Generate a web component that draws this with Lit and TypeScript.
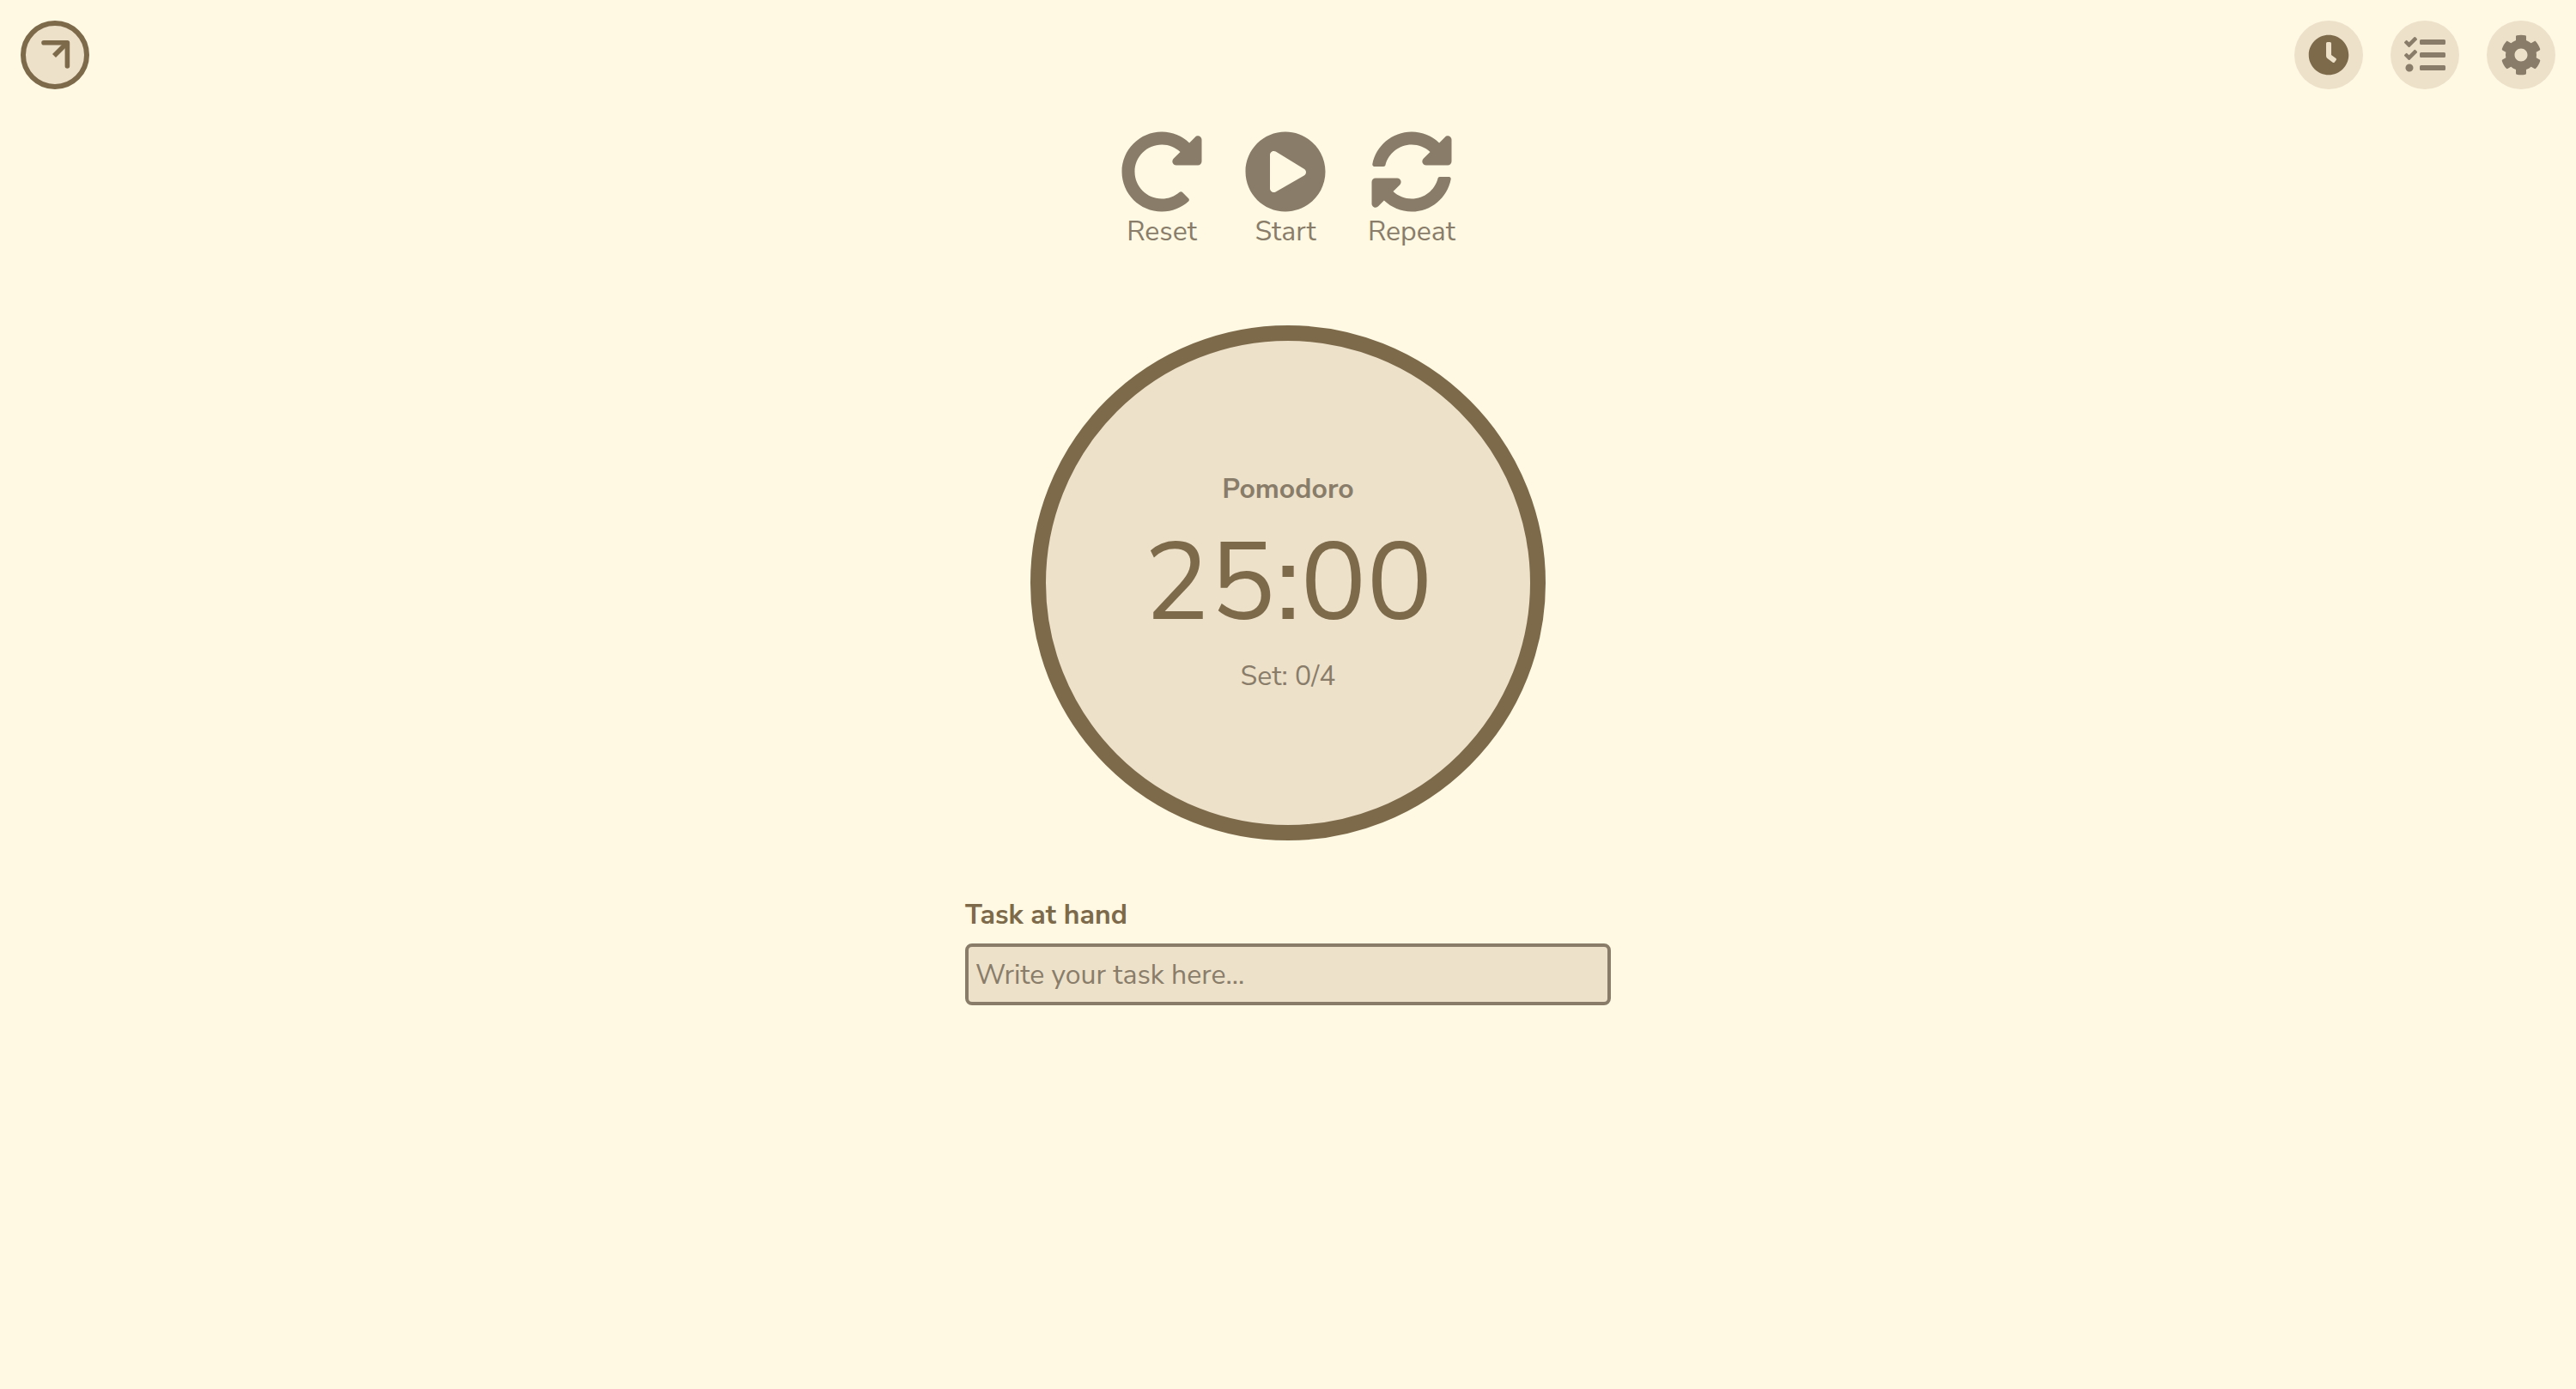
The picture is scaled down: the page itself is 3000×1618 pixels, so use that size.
import { LitElement, html, svg, css } from "lit";
import { customElement, property, state } from "lit/decorators.js";

const ICONS = {
  redo: "M256.455 8c66.269.119 126.437 26.233 170.859 68.685l35.715-35.715C478.149 25.851 504 36.559 504 57.941V192c0 13.255-10.745 24-24 24H345.941c-21.382 0-32.09-25.851-16.971-40.971l41.75-41.75c-30.864-28.899-70.801-44.907-113.23-45.273-92.398-.798-170.283 73.977-169.484 169.442C88.764 348.009 162.184 424 256 424c41.127 0 79.997-14.678 110.629-41.556 4.743-4.161 11.906-3.908 16.368.553l39.662 39.662c4.872 4.872 4.631 12.815-.482 17.433C378.202 479.813 319.926 504 256 504 119.034 504 8.001 392.967 8 256.002 7.999 119.193 119.646 7.755 256.455 8z",
  play: "M256 8C119 8 8 119 8 256s111 248 248 248 248-111 248-248S393 8 256 8zm115.7 272l-176 101c-15.8 8.8-35.7-2.5-35.7-21V152c0-18.4 19.8-29.8 35.7-21l176 107c16.4 9.2 16.4 32.9 0 42z",
  sync: "M370.72 133.28C339.458 104.008 298.888 87.962 255.848 88c-77.458.068-144.328 53.178-162.791 126.85-1.344 5.363-6.122 9.15-11.651 9.15H24.103c-7.498 0-13.194-6.807-11.807-14.176C33.933 94.924 134.813 8 256 8c66.448 0 126.791 26.136 171.315 68.685L463.03 40.97C478.149 25.851 504 36.559 504 57.941V192c0 13.255-10.745 24-24 24H345.941c-21.382 0-32.09-25.851-16.971-40.971l41.75-41.749zM32 296h134.059c21.382 0 32.09 25.851 16.971 40.971l-41.75 41.75c31.262 29.273 71.835 45.319 114.876 45.28 77.418-.07 144.315-53.144 162.787-126.849 1.344-5.363 6.122-9.15 11.651-9.15h57.304c7.498 0 13.194 6.807 11.807 14.176C478.067 417.076 377.187 504 256 504c-66.448 0-126.791-26.136-171.315-68.685L48.97 471.03C33.851 486.149 8 475.441 8 454.059V320c0-13.255 10.745-24 24-24z",
  clock: "M256,8C119,8,8,119,8,256S119,504,256,504,504,393,504,256,393,8,256,8Zm92.49,313h0l-20,25a16,16,0,0,1-22.49,2.5h0l-67-49.72a40,40,0,0,1-15-31.23V112a16,16,0,0,1,16-16h32a16,16,0,0,1,16,16V256l58,42.5A16,16,0,0,1,348.49,321Z",
  tasks: "M139.61 35.5a12 12 0 0 0-17 0L58.93 98.81l-22.7-22.12a12 12 0 0 0-17 0L3.53 92.41a12 12 0 0 0 0 17l47.59 47.4a12.78 12.78 0 0 0 17.61 0l15.59-15.62L156.52 69a12.09 12.09 0 0 0 .09-17zm0 159.19a12 12 0 0 0-17 0l-63.68 63.72-22.7-22.1a12 12 0 0 0-17 0L3.53 252a12 12 0 0 0 0 17L51 316.5a12.77 12.77 0 0 0 17.6 0l15.7-15.69 72.2-72.22a12 12 0 0 0 .09-16.9zM64 368c-26.49 0-48.59 21.5-48.59 48S37.53 464 64 464a48 48 0 0 0 0-96zm432 16H208a16 16 0 0 0-16 16v32a16 16 0 0 0 16 16h288a16 16 0 0 0 16-16v-32a16 16 0 0 0-16-16zm0-320H208a16 16 0 0 0-16 16v32a16 16 0 0 0 16 16h288a16 16 0 0 0 16-16V80a16 16 0 0 0-16-16zm0 160H208a16 16 0 0 0-16 16v32a16 16 0 0 0 16 16h288a16 16 0 0 0 16-16v-32a16 16 0 0 0-16-16z",
  cog: "M487.4 315.7l-42.6-24.6c4.3-23.2 4.3-47 0-70.2l42.6-24.6c4.9-2.8 7.1-8.6 5.5-14-11.1-35.6-30-67.8-54.7-94.6-3.8-4.1-10-5.1-14.8-2.3L380.8 110c-17.9-15.4-38.5-27.3-60.8-35.1V25.8c0-5.6-3.9-10.5-9.4-11.7-36.7-8.2-74.3-7.8-109.2 0-5.5 1.2-9.4 6.1-9.4 11.7V75c-22.2 7.9-42.8 19.8-60.8 35.1L88.7 85.5c-4.9-2.8-11-1.9-14.8 2.3-24.7 26.7-43.6 58.9-54.7 94.6-1.7 5.4.6 11.2 5.5 14L67.3 221c-4.3 23.2-4.3 47 0 70.2l-42.6 24.6c-4.9 2.8-7.1 8.6-5.5 14 11.1 35.6 30 67.8 54.7 94.6 3.8 4.1 10 5.1 14.8 2.3l42.6-24.6c17.9 15.4 38.5 27.3 60.8 35.1v49.2c0 5.6 3.9 10.5 9.4 11.7 36.7 8.2 74.3 7.8 109.2 0 5.5-1.2 9.4-6.1 9.4-11.7v-49.2c22.2-7.9 42.8-19.8 60.8-35.1l42.6 24.6c4.9 2.8 11 1.9 14.8-2.3 24.7-26.7 43.6-58.9 54.7-94.6 1.5-5.5-.7-11.3-5.6-14.1zM256 336c-44.1 0-80-35.9-80-80s35.9-80 80-80 80 35.9 80 80-35.9 80-80 80z",
};

type IconName = keyof typeof ICONS;

@customElement("fill-icon")
class FillIcon extends LitElement {
  @property() name: IconName = "clock";

  static styles = css`
    :host {
      display: block;
    }
    .glyph {
      display: block;
      width: 100%;
      height: 100%;
      fill: currentColor;
    }
  `;

  render() {
    return html`<svg class="glyph" viewBox="0 0 512 512" aria-hidden="true">
      ${svg`<path d=${ICONS[this.name]}></path>`}
    </svg>`;
  }
}

@customElement("app-root")
class AppRoot extends LitElement {
  @state() private task = "";

  static styles = css`
    :host {
      --page: #fff9e3;
      --panel: #ede1ca;
      --strong: #7d6a4b;
      --soft: #897d6a;
      display: block;
      min-height: 100vh;
      background: var(--page);
      color: var(--soft);
      font-family: "Nunito Sans", "Nunito", "Lato", sans-serif;
      font-size: 32px;
      line-height: 44px;
    }
    * {
      box-sizing: border-box;
    }
    .header {
      display: flex;
      justify-content: space-between;
      padding: 24px;
    }
    .nav {
      display: flex;
      gap: 32px;
    }
    .round {
      display: grid;
      place-items: center;
      width: 80px;
      height: 80px;
      border-radius: 50%;
      background: var(--panel);
      color: var(--soft);
    }
    .round.active {
      color: var(--strong);
    }
    .round fill-icon {
      width: 48px;
      height: 48px;
    }
    .logo {
      display: block;
      width: 80px;
      height: 80px;
    }
    .logo-disc {
      fill: var(--panel);
      stroke: var(--strong);
      stroke-width: 6;
    }
    .logo-arrow {
      fill: none;
      stroke: var(--strong);
      stroke-width: 5.6;
      stroke-linejoin: round;
    }
    .main {
      display: flex;
      flex-direction: column;
      align-items: center;
      padding: 24px;
    }
    .controls {
      display: flex;
      gap: 48px;
    }
    .control {
      display: flex;
      flex-direction: column;
      align-items: center;
      min-width: 96px;
      padding: 0;
      border: 0;
      background: none;
      color: inherit;
      font: inherit;
      cursor: pointer;
    }
    .control fill-icon {
      width: 96px;
      height: 96px;
    }
    .dial {
      display: flex;
      flex-direction: column;
      align-items: center;
      justify-content: center;
      width: 600px;
      height: 600px;
      margin-top: 87px;
      border: 18px solid var(--strong);
      border-radius: 50%;
      background: var(--panel);
    }
    .phase {
      margin: 0;
      font-size: 32px;
      font-weight: 700;
    }
    .time {
      margin: 0;
      color: var(--strong);
      font-size: 128px;
      line-height: 174px;
    }
    .sets {
      margin: 0;
    }
    .field {
      display: flex;
      flex-direction: column;
      gap: 11px;
      width: 100%;
      max-width: 752px;
      margin-top: 65px;
    }
    .label {
      color: var(--strong);
      font-weight: 700;
    }
    .input {
      width: 100%;
      height: 72px;
      padding: 0 8px;
      border: 4px solid var(--soft);
      border-radius: 8px;
      outline: none;
      background: var(--panel);
      color: var(--strong);
      font: inherit;
    }
    .input::placeholder {
      color: var(--soft);
      opacity: 1;
    }
  `;

  render() {
    return html`
      <header class="header">
        <a class="logo" href="#home" aria-label="Home">
          <svg class="logo" viewBox="0 0 80 80" aria-hidden="true">
            <circle class="logo-disc" cx="40" cy="40" r="37"></circle>
            <path class="logo-arrow" d="M27 25.8H54.4V53" stroke-linecap="round"></path>
            <path class="logo-arrow" d="M53 27L39 41"></path>
          </svg>
        </a>
        <nav class="nav">
          <a class="round active" href="#timer" aria-label="Timer"><fill-icon name="clock"></fill-icon></a>
          <a class="round" href="#tasks" aria-label="Tasks"><fill-icon name="tasks"></fill-icon></a>
          <a class="round" href="#settings" aria-label="Settings"><fill-icon name="cog"></fill-icon></a>
        </nav>
      </header>
      <main class="main">
        <div class="controls">
          <button class="control" type="button"><fill-icon name="redo"></fill-icon>Reset</button>
          <button class="control" type="button"><fill-icon name="play"></fill-icon>Start</button>
          <button class="control" type="button"><fill-icon name="sync"></fill-icon>Repeat</button>
        </div>
        <section class="dial">
          <h1 class="phase">Pomodoro</h1>
          <p class="time">25:00</p>
          <p class="sets">Set: 0/4</p>
        </section>
        <div class="field">
          <label class="label" for="task">Task at hand</label>
          <input
            class="input"
            id="task"
            type="text"
            placeholder="Write your task here..."
            .value=${this.task}
            @input=${(e: Event) => (this.task = (e.target as HTMLInputElement).value)}
          />
        </div>
      </main>
    `;
  }
}
